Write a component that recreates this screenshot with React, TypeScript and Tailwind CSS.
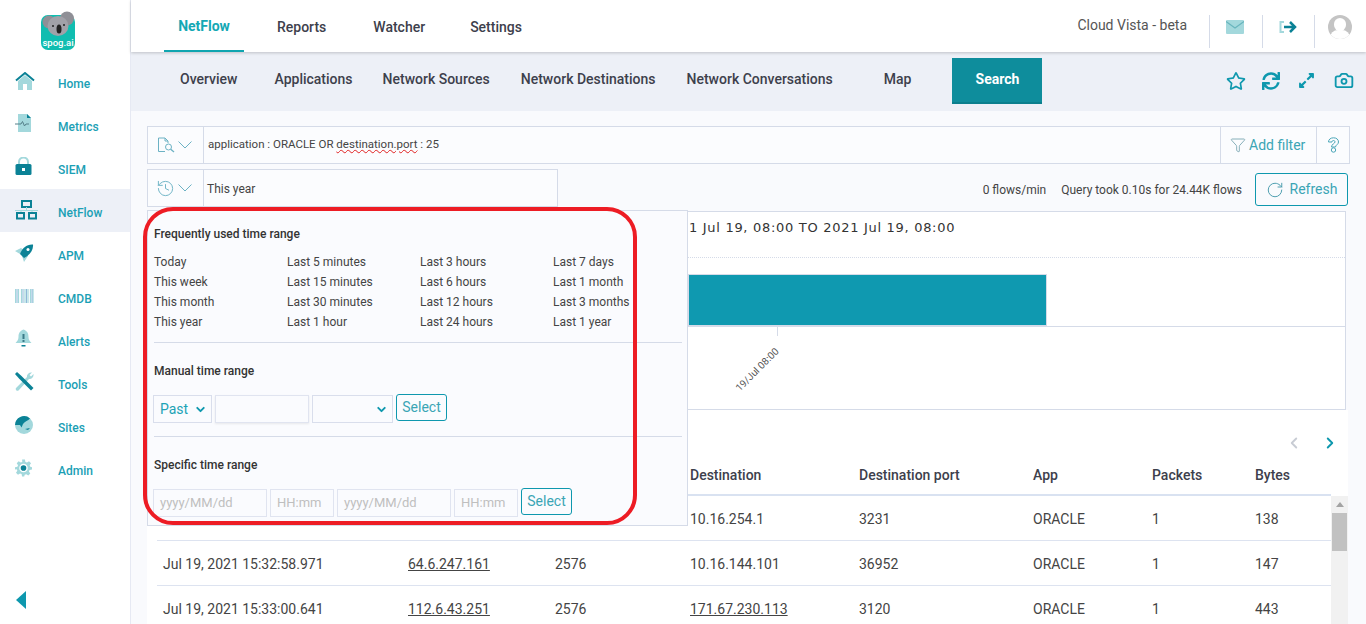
import React from "react";
import { ChevronDown, ChevronLeft, ChevronRight, Funnel, RotateCw, History, Camera } from "lucide-react";
import { FaRegStar, FaSync, FaExpandAlt } from "react-icons/fa";

const L = "#a3d8dc";

const Nav: [string, React.ReactNode][] = [
  ["Home", <svg width="20" height="18" viewBox="0 0 20 18"><path d="M3 9 L10 3 L17 9 V18 H12 V12 H8 V18 H3Z" fill={L}/><path d="M1 8.500 L10 1 L19 8.500" fill="none" stroke="#0b8296" strokeWidth="2"/></svg>],
  ["Metrics", <svg width="18" height="19" viewBox="0 0 18 19"><path d="M3 0H12L16 4V18H3Z" fill={L}/><path d="M12 0L16 4H12Z" fill="#0b8296"/><path d="M0 10H6L7.500 7.500L9.500 12L11 10H14" fill="none" stroke="#55808a" strokeWidth="1"/></svg>],
  ["SIEM", <svg width="17" height="19" viewBox="0 0 17 19"><path d="M4 8V5a4.500 4.500 0 0 1 9 0v3" fill="none" stroke={L} strokeWidth="2"/><rect x="0.500" y="7" width="16" height="11" rx="1.500" fill="#0b8296"/><rect x="7" y="11" width="3" height="3" fill="#fff"/></svg>],
  ["NetFlow", <svg width="23" height="20" viewBox="0 0 23 20"><rect x="7" y="1" width="9" height="6" fill="none" stroke="#0b8296" strokeWidth="2"/><path d="M0 10.500H23M11.500 7V10.500M6 10.500V13M17 10.500V13" stroke={L} strokeWidth="1"/><rect x="2" y="13" width="7" height="5.500" fill="none" stroke="#0b8296" strokeWidth="2"/><rect x="14" y="13" width="7" height="5.500" fill="none" stroke="#0b8296" strokeWidth="2"/></svg>],
  ["APM", <svg width="19" height="18" viewBox="0 0 19 18"><path d="M0 7L6 4L9 6L5 10Z M7 12L11 9L13 12L9 18Z" fill={L}/><path d="M5 10C7 4 12 0 18 0.500C18.500 6 15 11 9 14Z" fill="#0b8296"/><circle cx="13" cy="5.500" r="1.500" fill="#fff"/></svg>],
  ["CMDB", <svg width="19" height="14" viewBox="0 0 19 14"><path d="M0.500 0V14M3.500 0V14M6.500 0V14M10 0V14M13 0V14M15.500 0V14M18 0V14" stroke={L} strokeWidth="1.200"/><path d="M2 0V14M8 0V14M11.500 0V14M17 0V14" stroke="#8fb8d8" strokeWidth="1"/></svg>],
  ["Alerts", <svg width="17" height="19" viewBox="0 0 17 19"><path d="M8.500 0.500C12 2 13.500 4 13.500 8C13.500 11 15 12.500 16.500 14H0.500C2 12.500 3.500 11 3.500 8C3.500 4 5 2 8.500 0.500Z" fill={L}/><rect x="7.500" y="5" width="2" height="5" fill="#3a7a88"/><rect x="7.500" y="11" width="2" height="2" fill="#3a7a88"/><rect x="6.500" y="16" width="4" height="1.500" fill="#0b8296"/></svg>],
  ["Tools", <svg width="19" height="19" viewBox="0 0 19 19"><path d="M1 16L12 5C11.500 2.500 14 0 17 0.500L14.500 3L16 4.500L18.500 2C19 5 16.500 7.500 14 7L3.500 18.500C2 19.500 0 18 1 16Z" fill={L}/><path d="M0 2L2 0L6.500 4L18.500 16L16 18.500L4 6.500Z" fill="#0b8296"/></svg>],
  ["Sites", <svg width="18" height="18" viewBox="0 0 18 18"><circle cx="9" cy="9" r="9" fill={L}/><path d="M0 9A9 9 0 0 1 15 2.500C13 5 10 5 8 8L6.500 11.500L5 9Z" fill="#0b8296"/><path d="M10 13L15 12L13 14Z" fill="#0b8296"/></svg>],
  ["Admin", <svg width="17" height="18" viewBox="0 0 24 24"><circle cx="12" cy="12" r="4" fill="#0b8296"/><path fillRule="evenodd" d="M10 0h4l.7 3.400 2.200.9L19.800 2.400l2.800 2.800-1.900 2.900.9 2.200L24 11v3l-3.400.7-.9 2.200 1.900 2.900-2.800 2.800-2.900-1.900-2.200.9L13 24h-3l-.7-3.400-2.200-.9-2.900 1.900-2.800-2.800 1.900-2.900-.9-2.200L0 14v-3l3.400-.7.9-2.200L2.400 5.200l2.800-2.800 2.900 1.900 2.200-.9Zm2 6a6 6 0 1 0 0 12 6 6 0 0 0 0-12Z" fill={L}/></svg>],
];

const ranges = [
  ["Today", "Last 5 minutes", "Last 3 hours", "Last 7 days"],
  ["This week", "Last 15 minutes", "Last 6 hours", "Last 1 month"],
  ["This month", "Last 30 minutes", "Last 12 hours", "Last 3 months"],
  ["This year", "Last 1 hour", "Last 24 hours", "Last 1 year"],
];

const rows = [
  ["Jul 19, 2021 15:32:58.971", "64.6.247.161", "2576", "10.16.144.101", "36952", "ORACLE", "1", "147", false],
  ["Jul 19, 2021 15:33:00.641", "112.6.43.251", "2576", "171.67.230.113", "3120", "ORACLE", "1", "443", true],
] as const;

function Logo() {
  return (
    <svg width="36" height="40" viewBox="0 0 36 40">
      <rect x="1" y="4" width="34" height="35" rx="7" fill="#10bdb0" />
      <circle cx="9" cy="11" r="6.500" fill="#8f8f96" />
      <circle cx="27" cy="7.500" r="7" fill="#8f8f96" />
      <ellipse cx="18" cy="15" rx="10.500" ry="10" fill="#a1a1a8" />
      <ellipse cx="19" cy="18" rx="2.500" ry="4.500" fill="#222" />
      <circle cx="13" cy="15" r="1" fill="#222" />
      <circle cx="24" cy="14" r="1" fill="#222" />
      <text x="18" y="35" textAnchor="middle" fontSize="9.500" fontWeight="500" fill="#fff" fontFamily="Roboto, sans-serif">spog.ai</text>
    </svg>
  );
}

function Chev() {
  return <svg width="14" height="8" viewBox="0 0 14 8" className="shrink-0"><path d="M0.500 0.500L7 7L13.500 0.500" fill="none" stroke="#6cb2c4" strokeWidth="1"/></svg>;
}

function DocSearch() {
  return (
    <svg width="18" height="16" viewBox="0 0 18 16" fill="none" stroke="#6cb2c4" strokeWidth="1" className="shrink-0">
      <path d="M8 14.500H1.500V1H8L11 4V6M8 1V4H11" />
      <circle cx="11.500" cy="10" r="3" />
      <path d="M13.700 12.200L17 15" strokeWidth="1.300" />
    </svg>
  );
}

function Help() {
  return (
    <svg width="13" height="16" viewBox="0 0 13 16" fill="none" stroke="#4aa6b8" strokeWidth="1">
      <path d="M1.500 5C1.500 2.500 3.500 0.800 6.500 0.800S11.500 2.500 11.500 5C11.500 7.500 8.500 8 8.500 10H4.500C4.500 7 8 6.500 8 5C8 4 7.400 3.500 6.500 3.500S5 4 5 5Z" />
      <circle cx="6.500" cy="13" r="2.200" />
    </svg>
  );
}

function Select({ w, children }: { w: string; children?: React.ReactNode }) {
  return (
    <div className={`${w} h-[28px] border border-[#d9deec] flex items-center justify-between pl-[6px] pr-[4px] text-[14px] text-[#1da3b6]`}>
      <span>{children}</span>
      <ChevronDown size={13} strokeWidth={3.500} className="text-[#0e98ae]" />
    </div>
  );
}

function Ghost({ w, text }: { w: string; text: string }) {
  return <div className={`${w} h-[28px] border border-[#e0e4f0] flex items-center pl-[6px] text-[13px] text-[#bfbfbf]`}>{text}</div>;
}

function SelectBtn() {
  return <div className="w-[51px] h-[27px] border border-[#0e98ae] rounded-[3px] flex items-center justify-center text-[14px] text-[#3ba5b5] pb-[1px]">Select</div>;
}

export default function App() {
  return (
    <div className="w-[1366px] h-[624px] overflow-hidden flex bg-[#f9fafd] text-[#444] font-['Roboto',sans-serif] text-[12px]">
      <aside className="w-[131px] shrink-0 bg-white border-r border-[#e6e9f3] flex flex-col">
        <div className="h-[60px] pt-[11px] pl-[40px]"><Logo /></div>
        {Nav.map(([name, icon]) => (
          <div key={name} className={`h-[43px] flex items-center ${name === "NetFlow" ? "bg-[#edf0f7]" : ""}`}>
            <div className="w-[58px] flex justify-start pl-[15px] -mt-[2px]">{icon}</div>
            <span className="text-[12px] font-medium text-[#1ba0b5] pt-[4px]">{name}</span>
          </div>
        ))}
        <div className="mt-auto h-[33px] pl-[16px]">
          <div className="w-0 h-0 border-y-[9px] border-y-transparent border-r-[10px] border-r-[#0e98ae]" />
        </div>
      </aside>

      <main className="flex-1 min-w-0 flex flex-col">
        <header className="h-[52px] bg-white shrink-0 flex items-start shadow-[0_1px_3px_rgba(0,0,0,0.2)] relative z-10">
          <div className="ml-[33px] w-[80px] h-[52px] border-b-2 border-[#0fa5b0] flex items-center justify-center text-[14px] font-bold text-[#14a8b4] pt-[3px]">NetFlow</div>
          <div className="h-[52px] flex items-center pt-[3px] text-[14px] font-medium text-[#3d404c]">
            <span className="ml-[33px]">Reports</span>
            <span className="ml-[47px]">Watcher</span>
            <span className="ml-[45px]">Settings</span>
          </div>
          <span className="ml-auto mt-[15px] text-[14px] text-[#555]">Cloud Vista - beta</span>
          <div className="ml-[22px] mt-[15px] w-[54px] h-[33px] border-x border-[#d5dbe8] flex items-start justify-center pt-[5px] pr-[3px]">
            <svg width="18" height="14" viewBox="0 0 18 14"><rect width="18" height="14" rx="1" fill={L}/><path d="M0 1.500L9 8L18 1.500" fill="none" stroke="#68b5bd" strokeWidth="1.200"/></svg>
          </div>
          <div className="w-[52px] h-[33px] mt-[15px] border-r border-[#d5dbe8] flex items-start justify-center pt-[6px] pr-[2px]">
            <svg width="18" height="12" viewBox="0 0 18 12"><path d="M5 1H1.500V11H5" fill="none" stroke={L} strokeWidth="2"/><path d="M5 6H15M11 1L16 6L11 11" fill="none" stroke="#0b8296" strokeWidth="2.500"/></svg>
          </div>
          <div className="ml-[13px] mt-[15px] mr-[14px] w-[24px] h-[24px] rounded-full bg-[#c4c4c4] overflow-hidden relative">
            <div className="absolute left-[6px] top-[3px] w-[12px] h-[13px] rounded-full bg-white" />
            <div className="absolute left-[2px] top-[15px] w-[20px] h-[16px] rounded-full bg-white" />
          </div>
        </header>

        <nav className="h-[59px] shrink-0 bg-[#edf0f7] flex items-start text-[14px] font-medium text-[#3d404c]">
          <span className="ml-[49px] mt-[17px]">Overview</span>
          <span className="ml-[37px] mt-[17px]">Applications</span>
          <span className="ml-[30px] mt-[17px]">Network Sources</span>
          <span className="ml-[31px] mt-[17px]">Network Destinations</span>
          <span className="ml-[31px] mt-[17px]">Network Conversations</span>
          <span className="ml-[51px] mt-[17px]">Map</span>
          <div className="ml-[41px] mt-[6px] w-[90px] h-[46px] bg-[#0e8d9c] border-b-2 border-[#0b7f8d] text-white font-bold flex items-center justify-center pb-[2px]">Search</div>
          <div className="ml-auto mr-[12px] mt-[18px] flex items-center gap-[16px] text-[#0e98ae]">
            <div className="w-[20px] flex justify-start"><FaRegStar size={20} /></div>
            <div className="w-[20px] flex justify-start"><FaSync size={18} /></div>
            <div className="w-[20px] flex justify-start"><FaExpandAlt size={17} /></div>
            <div className="w-[20px] flex justify-center"><Camera size={21} strokeWidth={2.200} /></div>
          </div>
        </nav>

        <section className="flex-1 min-h-0 pl-[16px] pr-[16px] pt-[15px] relative">
          <div className="h-[38px] w-[1203px] border border-[#d5dbe8] flex items-center bg-[#fbfcfe]">
            <div className="w-[56px] h-full border-r border-[#d5dbe8] flex items-center pl-[9px] gap-[3px] shrink-0 text-[#6cb2c4]">
              <DocSearch />
              <Chev />
            </div>
            <span className="pl-[4px] flex-1 text-[11.5px]">application : ORACLE OR <span className="underline decoration-wavy decoration-[#e02020] decoration-1">destination.port</span> : 25</span>
            <div className="w-[96px] h-full border-l border-[#d5dbe8] flex items-center pl-[9px] gap-[3px] text-[14px] text-[#3ba5b5]">
              <Funnel size={16} strokeWidth={1.200} className="text-[#6b9ca8]" />Add filter
            </div>
            <div className="w-[33px] h-full border-l border-[#d5dbe8] flex items-center justify-center"><Help /></div>
          </div>

          <div className="h-[42px] mt-[5px] flex items-start">
            <div className="w-[411px] h-[38px] border border-[#d5dbe8] flex items-center bg-[#fbfcfe]">
              <div className="w-[56px] h-full border-r border-[#d5dbe8] flex items-center pl-[8px] gap-[3px] shrink-0 text-[#6cb2c4]">
                <History size={19} strokeWidth={1.200} />
                <Chev />
              </div>
              <span className="pl-[3px] pt-[1px] text-[12px]">This year</span>
            </div>
            <span className="ml-auto mr-[15px] mt-[12px] text-[12px] text-[#444]">0 flows/min</span>
            <span className="mr-[13px] mt-[12px] text-[12px] text-[#444]">Query took 0.10s for 24.44K flows</span>
            <div className="w-[93px] h-[33px] mr-[2px] mt-[4px] border border-[#0e98ae] rounded-[3px] flex items-center justify-center gap-[6px] text-[14px] text-[#3ba5b5]">
              <RotateCw size={18} strokeWidth={1.300} className="text-[#4a9cae]" />Refresh
            </div>
          </div>

          <div className="w-[1199px] h-[199px] border border-[#d5dbe8] bg-white relative overflow-hidden">
            <span className="absolute left-[541px] top-[6px] text-[13px] tracking-[0.7px] font-['DejaVu_Sans',sans-serif] text-[#333]">1 Jul 19, 08:00 TO 2021 Jul 19, 08:00</span>
            <div className="absolute left-[540px] right-0 top-[45px] border-t border-dotted border-[#d5dbe8]" />
            <div className="absolute left-[540px] top-[62px] w-[359px] h-[52px] bg-[#0f99b0] border border-[#d5dbe8]" />
            <div className="absolute left-[540px] right-0 top-[114px] border-t border-[#d5dbe8]" />
            <div className="absolute left-[629px] top-[115px] w-px h-[9px] bg-[#d5dbe8]" />
            <span className="absolute left-[581px] top-[150px] text-[10px] text-[#555] -rotate-45 whitespace-nowrap">19/Jul 08:00</span>
          </div>

          <div className="w-[1201px] h-[220px] bg-white relative overflow-hidden">
            <div className="ml-[10px] h-[86px] flex items-end pb-[8px] border-b-2 border-[#d9e2f1] w-[1174px] text-[14px] font-medium text-[#3d404c]">
              <div className="ml-[533px] w-[169px]">Destination</div>
              <div className="w-[174px]">Destination port</div>
              <div className="w-[119px]">App</div>
              <div className="w-[103px]">Packets</div>
              <div>Bytes</div>
            </div>
            <div className="absolute right-[9px] top-[24px] flex items-center gap-[18px]">
              <ChevronLeft size={18} strokeWidth={2.500} className="text-[#c8ccd4]" />
              <ChevronRight size={18} strokeWidth={2.500} className="text-[#0e98ae]" />
            </div>
            <div className="ml-[10px] w-[1174px] text-[14px]">
              <div className="h-[45px] flex items-center border-b border-[#dde3f0] pt-[2px]">
                <span className="ml-[533px] w-[169px]">10.16.254.1</span><span className="w-[174px]">3231</span><span className="w-[119px]">ORACLE</span><span className="w-[103px]">1</span><span>138</span>
              </div>
              {rows.map((r) => (
                <div key={r[1]} className="h-[45px] flex items-center border-b border-[#dde3f0] pt-[2px]">
                  <span className="ml-[6px] w-[245px]">{r[0]}</span>
                  <span className="w-[147px]"><span className="underline">{r[1]}</span></span>
                  <span className="w-[135px]">{r[2]}</span>
                  <span className="w-[169px]">{r[8] ? <span className="underline">{r[3]}</span> : r[3]}</span>
                  <span className="w-[174px]">{r[4]}</span>
                  <span className="w-[119px]">{r[5]}</span>
                  <span className="w-[103px]">{r[6]}</span>
                  <span>{r[7]}</span>
                </div>
              ))}
            </div>
            <div className="absolute right-0 top-[86px] bottom-0 w-[17px] bg-[#f1f1f1] flex flex-col items-center">
              <div className="h-[17px] w-full flex items-center justify-center"><div className="w-0 h-0 border-x-[4px] border-x-transparent border-b-[5px] border-b-[#a3a3a3]" /></div>
              <div className="w-[15px] h-[38px] bg-[#c1c1c1]" />
            </div>
          </div>

          <div className="absolute left-[16px] top-[99px] w-[541px] h-[316px] bg-[#fafbfe] border border-[#d5dbe8] pl-[6px] pr-[5px] text-[12px]">
            <div className="h-[132px] border-b border-[#d5dbe8] pt-[16px]">
              <div className="font-medium text-[#333] leading-[14px]">Frequently used time range</div>
              <div className="grid grid-cols-[133px_133px_133px_1fr] mt-[11px] leading-[20px] text-[#444]">
                {ranges.flat().map((x) => <span key={x}>{x}</span>)}
              </div>
            </div>
            <div className="h-[94px] border-b border-[#d5dbe8] pt-[21px]">
              <div className="font-medium text-[#333] leading-[14px]">Manual time range</div>
              <div className="flex items-start gap-[3px] mt-[17px] -ml-px">
                <Select w="w-[59px]">Past</Select>
                <div className="w-[94px] h-[28px] border border-[#e0e4f0] shadow-[0_1px_2px_rgba(0,0,0,0.08)]" />
                <Select w="w-[81px]" />
                <div className="-mt-px"><SelectBtn /></div>
              </div>
            </div>
            <div className="pt-[21px]">
              <div className="font-medium text-[#333] leading-[14px]">Specific time range</div>
              <div className="flex items-start gap-[3px] mt-[17px] -ml-px">
                <Ghost w="w-[114px]" text="yyyy/MM/dd" />
                <Ghost w="w-[64px]" text="HH:mm" />
                <Ghost w="w-[114px]" text="yyyy/MM/dd" />
                <Ghost w="w-[64px]" text="HH:mm" />
                <div className="-mt-px"><SelectBtn /></div>
              </div>
            </div>
          </div>
          <div className="absolute left-[12px] top-[96px] w-[494px] h-[318px] border-[4px] border-[#ed1c24] rounded-[30px] pointer-events-none" />
        </section>
      </main>
    </div>
  );
}
